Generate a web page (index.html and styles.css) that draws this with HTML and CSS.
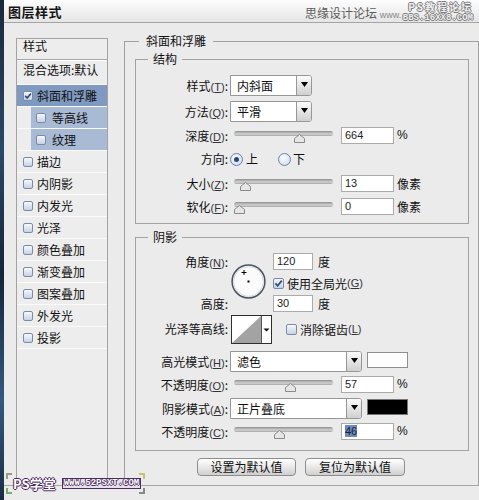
FILE: index.html
```html
<!DOCTYPE html>
<html lang="zh-CN">
<head>
<meta charset="utf-8">
<title>图层样式</title>
<link rel="stylesheet" href="styles.css">
</head>
<body>
<div class="screen">
  <div class="edge"></div>
  <div class="dialog">
    <div class="titlebar"><span class="title">图层样式</span></div>
    <div class="content">
      <div class="list">
        <div class="list-head">样式</div>
        <div class="list-blend">混合选项:默认</div>
        <div class="item active"><span class="cb"><svg viewBox="0 0 8 8"><path d="M1.2 3.9 L3.2 6.1 L6.9 1.4" fill="none" stroke="#2b4a7e" stroke-width="1.6"/></svg></span>斜面和浮雕</div>
        <div class="item sub"><div class="sub-in"><span class="cb"></span>等高线</div></div>
        <div class="item sub"><div class="sub-in"><span class="cb"></span>纹理</div></div>
        <div class="item"><span class="cb"></span>描边</div>
        <div class="item"><span class="cb"></span>内阴影</div>
        <div class="item"><span class="cb"></span>内发光</div>
        <div class="item"><span class="cb"></span>光泽</div>
        <div class="item"><span class="cb"></span>颜色叠加</div>
        <div class="item"><span class="cb"></span>渐变叠加</div>
        <div class="item"><span class="cb"></span>图案叠加</div>
        <div class="item"><span class="cb"></span>外发光</div>
        <div class="item"><span class="cb"></span>投影</div>
      </div>
      <fieldset class="outer">
        <legend>斜面和浮雕</legend>
        <div class="outer-body">
          <fieldset class="group">
            <legend>结构</legend>
            <div class="form f-struct">
              <div class="lbl h21">样式<span class="key">(<u>T</u>)</span>:</div>
              <div class="ctl"><div class="select w82"><span class="val">内斜面</span><span class="dd"><svg width="7" height="5" viewBox="0 0 7 5"><path d="M0 0H7L3.5 5Z" fill="#000"/></svg></span></div></div>

              <div class="lbl h21">方法<span class="key">(<u>Q</u>)</span>:</div>
              <div class="ctl"><div class="select w82"><span class="val">平滑</span><span class="dd"><svg width="7" height="5" viewBox="0 0 7 5"><path d="M0 0H7L3.5 5Z" fill="#000"/></svg></span></div></div>

              <div class="lbl">深度<span class="key">(<u>D</u>)</span>:</div>
              <div class="ctl"><div class="slider"><div class="track"></div><svg class="thumb" style="left:60px" viewBox="0 0 11 9"><path d="M5.5 0.5 L10.5 4.5 V8.5 H0.5 V4.5 Z" fill="#e6e6e6" stroke="#8a8a8a"/></svg></div><span class="field">664</span><span class="unit pct">%</span></div>

              <div class="lbl">方向:</div>
              <div class="ctl radios"><span class="radio on"></span><span class="rtxt">上</span><span class="radio r2"></span><span class="rtxt r2t">下</span></div>

              <div class="lbl">大小<span class="key">(<u>Z</u>)</span>:</div>
              <div class="ctl"><div class="slider"><div class="track"></div><svg class="thumb" style="left:6px" viewBox="0 0 11 9"><path d="M5.5 0.5 L10.5 4.5 V8.5 H0.5 V4.5 Z" fill="#e6e6e6" stroke="#8a8a8a"/></svg></div><span class="field">13</span><span class="unit">像素</span></div>

              <div class="lbl">软化<span class="key">(<u>F</u>)</span>:</div>
              <div class="ctl"><div class="slider"><div class="track"></div><svg class="thumb" style="left:0px" viewBox="0 0 11 9"><path d="M5.5 0.5 L10.5 4.5 V8.5 H0.5 V4.5 Z" fill="#e6e6e6" stroke="#8a8a8a"/></svg></div><span class="field">0</span><span class="unit">像素</span></div>
            </div>
          </fieldset>

          <fieldset class="group g-shadow">
            <legend>阴影</legend>
            <div class="form f-shadow">
              <div class="lbl">角度<span class="key">(<u>N</u>)</span>:</div>
              <svg class="dial" width="35" height="35" viewBox="0 0 35 35">
                <circle cx="17.5" cy="17.5" r="16.4" fill="#fbfbfb" stroke="#4a5162" stroke-width="1.5"/>
                <circle cx="17.5" cy="17.5" r="14.9" fill="none" stroke="#d3d7df" stroke-width="1"/>
                <rect x="16.5" y="16.5" width="2" height="2" fill="#000"/>
                <path d="M10.5 8.5h5M13 6v5" stroke="#000" stroke-width="1"/>
              </svg>
              <div class="ctl"><span class="field short">120</span><span class="unit">度</span></div>

              <span></span>
              <div class="ctl check"><span class="cb big"><svg viewBox="0 0 9 9"><path d="M1.4 4.4 L3.6 6.8 L7.8 1.6" fill="none" stroke="#2b4a7e" stroke-width="1.7"/></svg></span>使用全局光<span class="key">(<u>G</u>)</span></div>

              <div class="lbl h21">高度:</div>
              <div class="ctl mid"><span class="field short">30</span><span class="unit">度</span></div>

              <div class="lbl h30">光泽等高线:</div>
              <div class="ctl span2 contour-row">
                <svg class="contour" width="41" height="29" viewBox="0 0 41 29">
                  <rect x="0.5" y="0.5" width="40" height="28" fill="#fff" stroke="#2e2e2e"/>
                  <path d="M1 28 L30 1 V28 Z" fill="#a3a3a3"/>
                  <path d="M30.5 1 V28" stroke="#555"/>
                  <path d="M32.5 13.5 H38.5 L35.5 16.5 Z" fill="#111"/>
                </svg>
                <span class="cb big"></span>消除锯齿<span class="key">(<u>L</u>)</span>
              </div>

              <div class="lbl h21">高光模式<span class="key">(<u>H</u>)</span>:</div>
              <div class="ctl span2"><div class="select w132"><span class="val">滤色</span><span class="dd"><svg width="7" height="5" viewBox="0 0 7 5"><path d="M0 0H7L3.5 5Z" fill="#000"/></svg></span></div><span class="swatch white"></span></div>

              <div class="lbl">不透明度<span class="key">(<u>O</u>)</span>:</div>
              <div class="ctl span2"><div class="slider"><div class="track"></div><svg class="thumb" style="left:51px" viewBox="0 0 11 9"><path d="M5.5 0.5 L10.5 4.5 V8.5 H0.5 V4.5 Z" fill="#e6e6e6" stroke="#8a8a8a"/></svg></div><span class="field">57</span><span class="unit pct">%</span></div>

              <div class="lbl h21">阴影模式<span class="key">(<u>A</u>)</span>:</div>
              <div class="ctl span2"><div class="select w132"><span class="val">正片叠底</span><span class="dd"><svg width="7" height="5" viewBox="0 0 7 5"><path d="M0 0H7L3.5 5Z" fill="#000"/></svg></span></div><span class="swatch black"></span></div>

              <div class="lbl">不透明度<span class="key">(<u>C</u>)</span>:</div>
              <div class="ctl span2"><div class="slider"><div class="track"></div><svg class="thumb" style="left:40px" viewBox="0 0 11 9"><path d="M5.5 0.5 L10.5 4.5 V8.5 H0.5 V4.5 Z" fill="#e6e6e6" stroke="#8a8a8a"/></svg></div><span class="field"><span class="hl">46</span></span><span class="unit pct">%</span></div>
            </div>
          </fieldset>

          <div class="buttons">
            <button class="btn">设置为默认值</button>
            <button class="btn wide">复位为默认值</button>
          </div>
        </div>
      </fieldset>
    </div>
    <div class="footer"></div>
  </div>

  <div class="wm-site">思缘设计论坛 <span class="www">www.</span></div>
  <div class="wm-stamp"><div class="s1">PS教程论坛</div><div class="s2">BBS.16XX8.COM</div></div>
  <div class="wm-bottom">
    <span class="br tl"></span><span class="br bl"></span><span class="br tr"></span><span class="br brr"></span>
    <span class="wm-ps">PS学堂</span><span class="wm-url">WWW.52PSXT.COM</span>
  </div>
</div>
</body>
</html>
```

FILE: styles.css
```css
* { box-sizing: border-box; }
html, body { margin: 0; padding: 0; }
body {
  width: 479px; height: 500px; overflow: hidden;
  background: #ebebeb;
  font-family: "Noto Sans CJK SC", "Noto Sans", sans-serif;
  font-size: 12px; color: #111;
}
.screen { position: relative; display: flex; width: 479px; height: 500px; }
.edge {
  width: 4px; flex: none;
  background: linear-gradient(#1a283c, #2a4868 30%, #13253b 55%, #335a80 80%, #1a2c44);
}
.dialog { flex: 1; display: flex; flex-direction: column; min-width: 0; }

.titlebar {
  height: 23px; border-bottom: 1px solid #a4a4a4;
  background: linear-gradient(#fdfdfd, #e5e5e5);
  padding: 2px 0 0 4px;
}
.title { font-weight: 700; font-size: 13px; line-height: 20px; letter-spacing: 0.5px; color: #151515; }

.content { height: 462px; display: flex; padding-left: 12px; }

/* left style list */
.list {
  width: 92px; flex: none; margin-top: 15px;
  border: 1px solid #a3a3a3; border-bottom: 0;
  background: #ededed;
}
.list-head {
  height: 21px; padding-left: 6px; line-height: 14px;
  border-bottom: 1px solid #a8a8a8; box-shadow: 0 1px 0 #fff;
}
.list-blend {
  height: 25px; padding: 1px 0 0 6px; line-height: 18px;
  border-bottom: 1px solid #f8f8f8; white-space: nowrap;
}
.item {
  height: 22px; display: flex; align-items: center;
  padding-left: 6px; border-bottom: 1px solid #fafafa; line-height: 21px;
}
.item.active { background: #8099c0; }
.item.sub { padding-left: 14px; align-items: stretch; }
.sub-in { flex: 1; display: flex; align-items: center; padding-left: 5px; background: #a8bad4; }
.cb {
  width: 10px; height: 10px; flex: none; display: flex;
  border: 1px solid #7b8aa6; border-radius: 2px;
  background: linear-gradient(#f7f9fc, #c6d2e4);
  margin-right: 4px;
}
.cb svg { width: 100%; height: 100%; }
.sub-in .cb { margin-right: 6px; }
.cb.big { width: 11px; height: 11px; margin-right: 3px; }

/* group boxes */
.outer {
  margin: 10px 0 0 16px; padding: 0; width: 355px; min-width: 0; flex: none;
  border: 1px solid #a0a0a0; border-bottom: 0;
}
.outer > legend { margin-left: 14px; padding: 0 7px; line-height: 16px; font-size: 12px; }
.outer-body { padding: 2px 9px 0 10px; }
.group { margin: 0; padding: 0; min-width: 0; border: 1px solid #a2a2a2; }
.group > legend { margin-left: 12px; padding: 0 5px; line-height: 16px; font-size: 12px; }
.g-shadow { margin-top: 5px; }

/* forms */
.form { display: grid; align-items: start; }
.f-struct {
  grid-template-columns: 94px 1fr;
  grid-template-rows: 26px 26px 23px 25px 23px 18px;
  padding: 8px 0 7px;
}
.f-shadow {
  grid-template-columns: 94px 43px 1fr;
  grid-template-rows: 20px 20px 21px 37px 25px 22px 25px 18px;
  padding: 8px 0 9px;
}
.lbl { text-align: right; padding-right: 2px; line-height: 18px; white-space: nowrap; }
.lbl.h21 { line-height: 21px; }
.lbl.h30 { line-height: 30px; }
.key { font-family: "Liberation Sans", sans-serif; font-size: 11px; color: #333; }
.ctl { display: flex; align-items: flex-start; min-width: 0; white-space: nowrap; }
.span2 { grid-column: span 2; }

.select {
  display: flex; height: 21px; flex: none;
  border: 1px solid #979797; border-radius: 0 3px 3px 0; background: #fff;
}
.select .val { flex: 1; padding-left: 6px; line-height: 19px; }
.select .dd {
  width: 15px; border-left: 1px solid #979797; border-radius: 0 2px 2px 0;
  background: linear-gradient(#fbfbfb, #d0d0d0);
  display: flex; align-items: center; justify-content: center; padding-bottom: 2px;
}
.w82 { width: 82px; }
.w132 { width: 132px; }

.slider { position: relative; width: 99px; height: 18px; margin-left: 4px; flex: none; }
.track {
  margin-top: 4px; height: 5px; border-radius: 3px;
  background: linear-gradient(#8e8e8e, #d2d2d2 60%, #a6a6a6);
}
.thumb { position: absolute; top: 7px; width: 11px; height: 9px; }

.field {
  width: 53px; height: 17px; margin-left: 8px; flex: none;
  border: 1px solid #ababab; background: #fff;
  font: 11px/15px "Liberation Sans", sans-serif; color: #222; padding-left: 3px;
}
.field.short { width: 40px; margin-left: 0; }
.hl { background: #6d8bb9; color: #16223a; }
.unit { margin-left: 3px; line-height: 17px; }
.field.short + .unit { margin-left: 5px; }
.unit.pct { font-family: "Liberation Sans", sans-serif; font-size: 12px; }
.ctl.mid { align-items: center; height: 21px; }

.radios { align-items: center; height: 18px; }
.radio {
  width: 13px; height: 13px; flex: none; border-radius: 50%;
  border: 1px solid #6d82a8;
  background: radial-gradient(circle at 40% 35%, #ffffff, #c3d3ea);
}
.radio.on::after {
  content: ""; display: block; width: 5px; height: 5px; margin: 3px;
  border-radius: 50%; background: #2c4680;
}
.rtxt { margin-left: 3px; line-height: 18px; }
.radio.r2 { margin-left: 20px; }
.rtxt.r2t { margin-left: 2px; }

.dial { grid-row: span 3; margin: 11px 0 0 1px; }
.check { align-items: center; height: 20px; }
.contour-row { align-items: center; height: 30px; }
.contour { margin-left: 1px; flex: none; }
.contour-row .cb { margin-left: 14px; }

.swatch { width: 41px; height: 16px; margin: 1px 0 0 5px; flex: none; }
.swatch.white { background: #fff; border: 1px solid #8f8f8f; }
.swatch.black { background: #000; border: 1px solid #777; }

.buttons { display: flex; justify-content: center; gap: 9px; margin-top: 7px; padding-right: 2px; }
.btn {
  width: 99px; height: 18px; padding: 0; margin: 0;
  border: 1px solid #8e8e8e; border-radius: 4px;
  background: linear-gradient(#ffffff, #e4e4e4 60%, #cfcfcf);
  font: 12px/16px "Noto Sans CJK SC", sans-serif; color: #111;
}
.btn.wide { width: 100px; }

.footer { height: 15px; border-top: 1px solid #a6a6a6; background: #ebebeb; }

/* watermarks (overlays) */
.wm-site {
  position: absolute; left: 305px; top: 5px;
  font-size: 12px; line-height: 16px; color: #5c5c5c; white-space: nowrap;
}
.wm-site .www { font-family: "Liberation Sans", sans-serif; font-size: 9px; color: #888; }
.wm-stamp {
  position: absolute; right: 6px; top: 0; text-align: right; color: #eeeeee;
  text-shadow: 1px 0 #7c7c7c, -1px 0 #7c7c7c, 0 1px #7c7c7c, 0 -1px #7c7c7c;
  white-space: nowrap;
}
.wm-stamp .s1 { font-size: 10px; line-height: 13px; letter-spacing: 2px; font-weight: 700; }
.wm-stamp .s2 { font: bold 9px/9px "Liberation Mono", monospace; margin-top: 1px; }

.wm-bottom {
  position: absolute; left: 6px; top: 473px; width: 139px; height: 21px;
  display: flex; align-items: center; gap: 6px; padding-left: 7px;
}
.wm-ps {
  font: bold 13px/13px "Noto Sans CJK SC", sans-serif; color: #fff;
  text-shadow: 1px 0 #4a2160, -1px 0 #4a2160, 0 1px #4a2160, 0 -1px #4a2160;
}
.wm-url {
  border: 1px solid #4d2d5e; background: #e6e0ea; padding: 0 1px;
  font: bold 9px/9px "Liberation Mono", monospace; color: #fff;
  text-shadow: 1px 0 #4d2d5e, -1px 0 #4d2d5e, 0 1px #4d2d5e, 0 -1px #4d2d5e;
}
.br { position: absolute; width: 6px; height: 6px; border: 2px solid #999; }
.br.tl { left: 0; top: 0; border-right: 0; border-bottom: 0; border-color: #9a9a86; }
.br.bl { left: 0; bottom: 0; border-right: 0; border-top: 0; border-color: #78ad6e; }
.br.tr { right: 0; top: 0; border-left: 0; border-bottom: 0; border-color: #c9c170; }
.br.brr { right: 0; bottom: 0; border-left: 0; border-top: 0; border-color: #888; }
```
